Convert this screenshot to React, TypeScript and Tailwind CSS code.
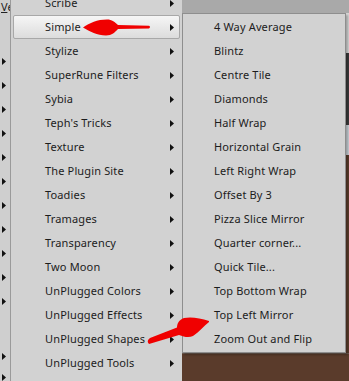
import React from "react";

const menu1 = [
  "Scribe",
  "Simple",
  "Stylize",
  "SuperRune Filters",
  "Sybia",
  "Teph's Tricks",
  "Texture",
  "The Plugin Site",
  "Toadies",
  "Tramages",
  "Transparency",
  "Two Moon",
  "UnPlugged Colors",
  "UnPlugged Effects",
  "UnPlugged Shapes",
  "UnPlugged Tools",
];

const menu2 = [
  "4 Way Average",
  "Blintz",
  "Centre Tile",
  "Diamonds",
  "Half Wrap",
  "Horizontal Grain",
  "Left Right Wrap",
  "Offset By 3",
  "Pizza Slice Mirror",
  "Quarter corner...",
  "Quick Tile...",
  "Top Bottom Wrap",
  "Top Left Mirror",
  "Zoom Out and Flip",
];

const leftArrows = [62, 86, 110, 134, 158, 182, 206, 230, 254, 278, 302, 357, 378];

function Tri() {
  return (
    <svg width="4" height="7" viewBox="0 0 4 7" className="shrink-0">
      <path d="M0 0 L4 3.5 L0 7 Z" fill="#111" />
    </svg>
  );
}

export default function App() {
  return (
    <div
      className="relative w-[349px] h-[381px] overflow-hidden bg-[#cfcfcf] text-[#1c1c1c]"
      style={{ fontFamily: '"Noto Sans", "Open Sans", sans-serif' }}
    >
      {/* left strip of underlying menu */}
      <div className="absolute left-0 top-0 w-[10px] h-full">
        <div className="text-[11px] leading-[13px] pl-[1px] text-[#222] whitespace-nowrap">
          <span className="underline">V</span>e
        </div>
        {leftArrows.map((y) => (
          <div key={y} className="absolute left-[2px]" style={{ top: y - 4 }}>
            <Tri />
          </div>
        ))}
      </div>

      {/* background top bar and right */}
      <div className="absolute left-[182px] top-0 right-0 h-[13px] bg-[#a9a9a9]" />
      <div className="absolute left-[345px] top-[13px] right-0 bottom-0 flex flex-col">
        <div className="h-[40px] bg-[#d6d6d6]" />
        <div className="h-[72px] bg-[#3a3a3a]" />
        <div className="h-[30px] bg-[#c9d0d6]" />
        <div className="flex-1 bg-[#5a3b2b]" />
      </div>
      <div className="absolute left-[182px] top-[353px] right-0 bottom-0 bg-[#5a3b2b] border-t border-[#6b5a50]" />

      {/* main menu */}
      <div className="absolute left-[10px] top-[-12px] w-[172px] bg-[#d2d2d2] border-l border-[#9a9a9a] pt-[3px] h-[400px]">
        {menu1.map((t) => {
          const hi = t === "Simple";
          return (
            <div key={t} className="h-[24px] px-[2px] flex">
              <div
                className={
                  "flex-1 flex items-center pl-[31px] pr-[5px] rounded-[2px] border " +
                  (hi
                    ? "border-[#a8a8a8] bg-gradient-to-b from-[#f6f6f6] to-[#dcdcdc]"
                    : "border-transparent")
                }
              >
                <span className="flex-1 text-[11px] tracking-[0.15px]">{t}</span>
                <Tri />
              </div>
            </div>
          );
        })}
      </div>

      {/* submenu */}
      <div className="absolute left-[182px] top-[13px] w-[164px] h-[340px] bg-[#d2d2d2] border border-[#8e8e8e] pt-[1px] shadow-[2px_2px_2px_rgba(0,0,0,0.25)]">
        {menu2.map((t) => (
          <div key={t} className="h-[24px] flex items-center pl-[31px]">
            <span className="text-[11px] tracking-[0.15px]">{t}</span>
          </div>
        ))}
      </div>

      {/* red arrows */}
      <svg className="absolute inset-0 pointer-events-none" width="349" height="381" viewBox="0 0 349 381">
        <path
          d="M83,27.5 C90,23 97,19.5 107,19.5 C112,19.5 115,22 118,25 L149,25.8 Q151,27 149,28.4 L118,29 C115,32 112,35.5 106,35.5 C97,35.5 90,31.5 83,27.5 Z"
          fill="#f00000"
        />
        <path
          d="M209,321 C200,318 191,316.5 184,318 C179,319.5 177,324 177,327.5 L150,338 Q146,341 149,344 L179,335 C184,337 189,338 193,336 C199,332 204,326 209,322 Z"
          fill="#f00000"
        />
      </svg>
    </div>
  );
}
